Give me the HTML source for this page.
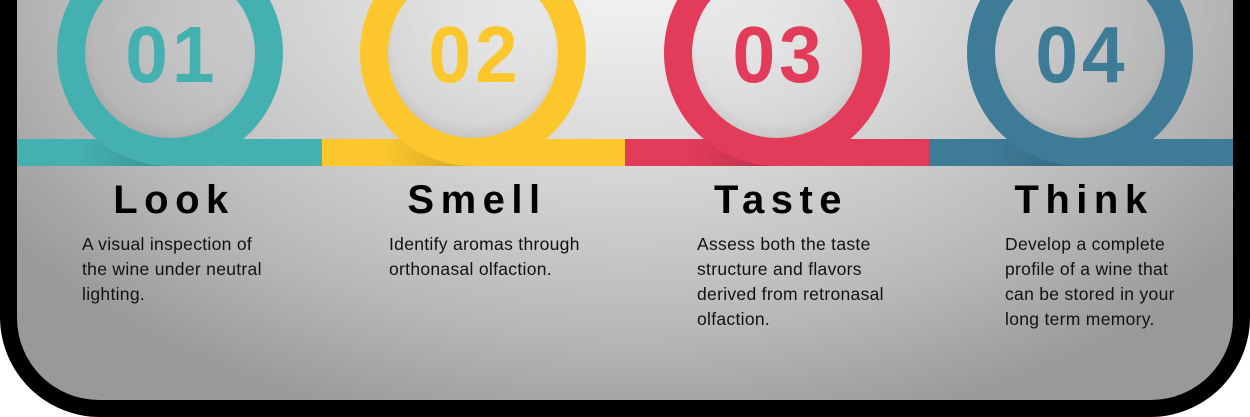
<!DOCTYPE html>
<html><head><meta charset="utf-8"><style>
html,body{margin:0;padding:0;width:1250px;height:417px;overflow:hidden;background:#fff}
.outer{position:absolute;left:0;top:-50px;width:1250px;height:467px;background:#000;border-radius:0 0 100px 100px}
.inner{position:absolute;left:17px;top:-50px;width:1216px;height:450px;border-radius:0 0 82px 82px;overflow:hidden;
background:radial-gradient(ellipse 760px 480px at 615px 20px,#f6f6f6 0%,#d8d8d8 40%,#b8b8b8 75%,#999 100%)}
svg{position:absolute;left:0;top:0}
.t{position:absolute;top:178px;width:300px;text-align:center;font:bold 40px "Liberation Sans",sans-serif;letter-spacing:6.5px;color:#000}
.d{position:absolute;top:232px;font:17.5px/25px "Liberation Sans",sans-serif;letter-spacing:0.3px;color:#111}
</style></head><body>
<div class="outer"></div>
<div class="inner"></div>
<svg width="1250" height="417" viewBox="0 0 1250 417">
<defs>
<radialGradient id="ig" cx="0.5" cy="0.45" r="0.55"><stop offset="0" stop-color="#000" stop-opacity="0"/><stop offset="0.85" stop-color="#000" stop-opacity="0.02"/><stop offset="1" stop-color="#000" stop-opacity="0.08"/></radialGradient>
<linearGradient id="sh" x1="0" x2="1" y1="0" y2="0"><stop offset="0" stop-color="#000" stop-opacity="0"/><stop offset="1" stop-color="#000" stop-opacity="0.18"/></linearGradient>
</defs>
<g font-family="Liberation Sans,sans-serif" font-weight="bold" font-size="80" text-anchor="middle">
<rect x="17" y="139" width="305" height="27" fill="#45b0b0"/>
<rect x="322" y="139" width="303" height="27" fill="#fcc72d"/>
<rect x="625" y="139" width="304" height="27" fill="#e33b5a"/>
<rect x="929" y="139" width="304" height="27" fill="#3e7b97"/>
<rect x="80" y="139" width="90" height="27" fill="url(#sh)"/>
<rect x="383" y="139" width="90" height="27" fill="url(#sh)"/>
<rect x="687" y="139" width="90" height="27" fill="url(#sh)"/>
<rect x="990" y="139" width="90" height="27" fill="url(#sh)"/>
<circle cx="170" cy="53" r="99" fill="none" stroke="#45b0b0" stroke-width="28"/>
<circle cx="473" cy="53" r="99" fill="none" stroke="#fcc72d" stroke-width="28"/>
<circle cx="777" cy="53" r="99" fill="none" stroke="#e33b5a" stroke-width="28"/>
<circle cx="1080" cy="53" r="99" fill="none" stroke="#3e7b97" stroke-width="28"/>
<circle cx="170" cy="53" r="85" fill="url(#ig)"/>
<circle cx="473" cy="53" r="85" fill="url(#ig)"/>
<circle cx="777" cy="53" r="85" fill="url(#ig)"/>
<circle cx="1080" cy="53" r="85" fill="url(#ig)"/>
<g transform="scale(0.96,1)" letter-spacing="4">
<text x="179" y="82" fill="#45b0b0">01</text>
<text x="494.8" y="82" fill="#fcc72d">02</text>
<text x="811.5" y="82" fill="#e33b5a">03</text>
<text x="1127" y="82" fill="#3e7b97">04</text>
</g>
</g>
</svg>
<div class="t" style="left:24px">Look</div>
<div class="t" style="left:327px">Smell</div>
<div class="t" style="left:631px">Taste</div>
<div class="t" style="left:934px">Think</div>
<div class="d" style="left:82px">A visual inspection of<br>the wine under neutral<br>lighting.</div>
<div class="d" style="left:389px">Identify aromas through<br>orthonasal olfaction.</div>
<div class="d" style="left:697px">Assess both the taste<br>structure and flavors<br>derived from retronasal<br>olfaction.</div>
<div class="d" style="left:1005px">Develop a complete<br>profile of a wine that<br>can be stored in your<br>long term memory.</div>
</body></html>
